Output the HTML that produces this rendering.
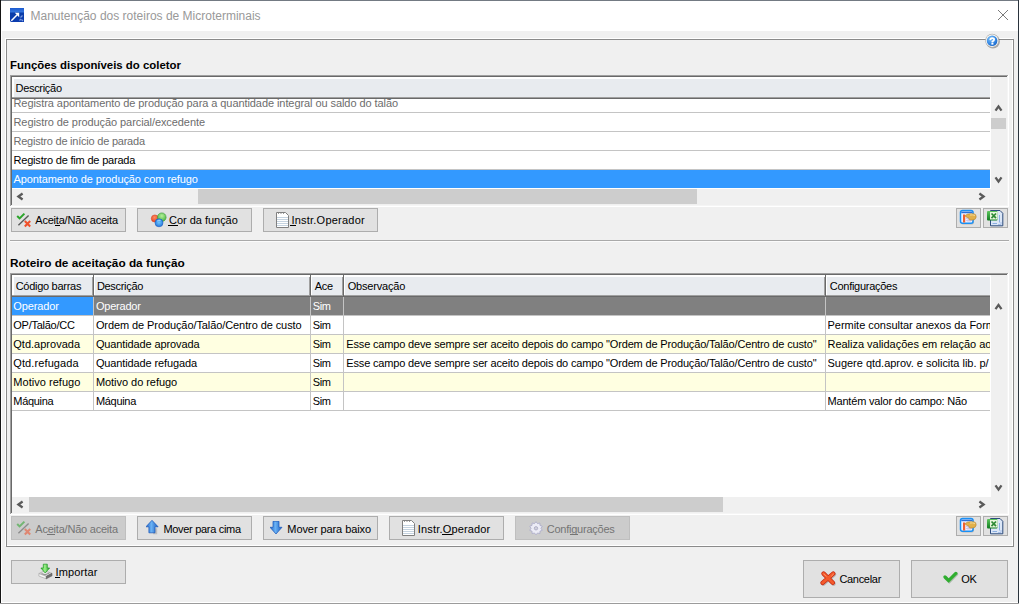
<!DOCTYPE html>
<html><head><meta charset="utf-8"><style>
html,body{margin:0;padding:0}
body{width:1033px;height:611px;position:relative;overflow:hidden;background:#fff;font-family:"Liberation Sans",sans-serif}
.t{position:absolute;white-space:pre;font-family:"Liberation Sans",sans-serif}
u{text-decoration:none;padding:0 1px;margin:0 -1px;background:linear-gradient(currentColor,currentColor) no-repeat 0 100%/100% 1px}
</style></head><body>
<div style="position:absolute;left:0px;top:0px;width:1019px;height:1px;background:#737a83"></div>
<div style="position:absolute;left:1px;top:1px;width:1017px;height:602px;background:#fff"></div>
<div style="position:absolute;left:2px;top:31px;width:1016px;height:571px;background:#f0f0f0"></div>
<div style="position:absolute;left:0px;top:0px;width:1px;height:603px;background:#151515"></div>
<div style="position:absolute;left:1018px;top:0px;width:1px;height:604px;background:#2a333c"></div>
<div style="position:absolute;left:0px;top:603px;width:1019px;height:1px;background:#9b9b9b"></div>
<svg style="position:absolute;left:10px;top:8px" width="14" height="14" viewBox="0 0 14 14">
<defs><linearGradient id="tg" x1="0" y1="0" x2="0" y2="1"><stop offset="0" stop-color="#1a5ad0"/><stop offset="0.28" stop-color="#3576dd"/><stop offset="0.36" stop-color="#0a3ca8"/><stop offset="1" stop-color="#0b3db0"/></linearGradient></defs>
<path d="M0 0 H14 V14 H1 L0 13 Z" fill="url(#tg)"/>
<path d="M1.3 12.7 L7.2 6.8" stroke="#fff" stroke-width="1.5"/><path d="M4.8 4.8 H9.2 V9.2 Z" fill="#fff"/>
<path d="M10.5 9.5 L12.5 7.5 M9.5 12.5 L11 11 M11.5 11.5 L13 13" stroke="#7d9be0" stroke-width="1.2"/>
</svg>
<div class="t" style="left:30.50px;top:9px;font-size:12px;line-height:14px;letter-spacing:-0.000px;color:#999999;">Manutenção dos roteiros de Microterminais</div>
<svg style="position:absolute;left:997px;top:9px" width="12" height="12" viewBox="0 0 12 12">
<path d="M1 1 L11 11 M11 1 L1 11" stroke="#7a7a7a" stroke-width="1"/></svg>
<div style="position:absolute;left:5px;top:38px;width:1008px;height:1px;background:#fff"></div>
<div style="position:absolute;left:5px;top:38px;width:1px;height:508px;background:#fff"></div>
<div style="position:absolute;left:5px;top:545px;width:1008px;height:1px;background:#fff"></div>
<div style="position:absolute;left:1012px;top:38px;width:1px;height:508px;background:#fff"></div>
<div style="position:absolute;left:6px;top:39px;width:1008px;height:1px;background:#8a8a8a"></div>
<div style="position:absolute;left:6px;top:39px;width:1px;height:508px;background:#8a8a8a"></div>
<div style="position:absolute;left:6px;top:546px;width:1008px;height:1px;background:#8a8a8a"></div>
<div style="position:absolute;left:1013px;top:39px;width:1px;height:508px;background:#8a8a8a"></div>
<svg style="position:absolute;left:984px;top:32px" width="18" height="18" viewBox="0 0 18 18">
<defs><radialGradient id="hg" cx="0.35" cy="0.3" r="0.75"><stop offset="0" stop-color="#7cc0f8"/><stop offset="0.6" stop-color="#3b8de6"/><stop offset="1" stop-color="#1765c8"/></radialGradient></defs>
<circle cx="8.9" cy="9.5" r="7" fill="#6a6a6a" opacity="0.55"/>
<circle cx="8.1" cy="8.7" r="6.9" fill="#b5b5b5"/>
<circle cx="8.1" cy="8.7" r="6.2" fill="#fbf8f2"/>
<circle cx="8.1" cy="8.7" r="5.3" fill="url(#hg)"/>
<path d="M6.3 8.1 Q6.4 6.1 8.2 6.1 Q10.2 6.1 10.1 7.7 Q10 8.8 8.4 9.5 V10.4" fill="none" stroke="#fff" stroke-width="1.8"/><rect x="7.4" y="11" width="2" height="1.6" fill="#fff"/>
</svg>
<div class="t" style="left:10.30px;top:59px;font-size:11px;line-height:13px;letter-spacing:0.000px;color:#000;font-weight:bold;transform:scaleX(1.0359);transform-origin:0 0;">Funções disponíveis do coletor</div>
<div style="position:absolute;left:10px;top:75px;width:999px;height:1px;background:#a0a0a0"></div>
<div style="position:absolute;left:10px;top:75px;width:1px;height:132px;background:#a0a0a0"></div>
<div style="position:absolute;left:10px;top:206px;width:999px;height:1px;background:#fff"></div>
<div style="position:absolute;left:1008px;top:75px;width:1px;height:132px;background:#fff"></div>
<div style="position:absolute;left:11px;top:76px;width:997px;height:1px;background:#696969"></div>
<div style="position:absolute;left:11px;top:76px;width:1px;height:130px;background:#696969"></div>
<div style="position:absolute;left:11px;top:205px;width:997px;height:1px;background:#f5f5f5"></div>
<div style="position:absolute;left:1007px;top:76px;width:1px;height:130px;background:#f5f5f5"></div>
<div style="position:absolute;left:12px;top:77px;width:995px;height:128px;background:#fff"></div>
<div style="position:absolute;left:12px;top:77px;width:978px;height:22px;background:#fff"></div>
<div style="position:absolute;left:14px;top:79px;width:976px;height:18px;background:#e8ebef"></div>
<div style="position:absolute;left:12px;top:97px;width:978px;height:1px;background:#a0a0a0"></div>
<div style="position:absolute;left:12px;top:98px;width:978px;height:1px;background:#696969"></div>
<div style="position:absolute;left:991px;top:77px;width:16px;height:22px;background:#f0f0f0"></div>
<div class="t" style="left:15.50px;top:82px;font-size:11px;line-height:13px;letter-spacing:-0.300px;color:#000;">Descrição</div>
<div style="position:absolute;left:12px;top:99px;width:978px;height:89px;background:#fff"></div>
<div style="position:absolute;left:12px;top:112px;width:978px;height:1px;background:#c4c4c4"></div>
<div style="position:absolute;left:12px;top:131px;width:978px;height:1px;background:#c4c4c4"></div>
<div style="position:absolute;left:12px;top:150px;width:978px;height:1px;background:#c4c4c4"></div>
<div style="position:absolute;left:12px;top:169px;width:978px;height:1px;background:#c4c4c4"></div>
<div style="position:absolute;left:12px;top:170px;width:978px;height:18px;background:#3399ff"></div>
<div class="t" style="left:13.50px;top:97px;font-size:11px;line-height:13px;letter-spacing:-0.074px;color:#6d6d6d;">Registra apontamento de produção para a quantidade integral ou saldo do talão</div>
<div class="t" style="left:13.50px;top:116px;font-size:11px;line-height:13px;letter-spacing:-0.079px;color:#6d6d6d;">Registro de produção parcial/excedente</div>
<div class="t" style="left:13.50px;top:135px;font-size:11px;line-height:13px;letter-spacing:-0.225px;color:#6d6d6d;">Registro de início de parada</div>
<div class="t" style="left:13.50px;top:154px;font-size:11px;line-height:13px;letter-spacing:-0.194px;color:#000;">Registro de fim de parada</div>
<div class="t" style="left:13.50px;top:173px;font-size:11px;line-height:13px;letter-spacing:-0.101px;color:#fff;">Apontamento de produção com refugo</div>
<div style="position:absolute;left:991px;top:99px;width:16px;height:90px;background:#f0f0f0"></div>
<div style="position:absolute;left:991px;top:118px;width:15px;height:11px;background:#cdcdcd"></div>
<div style="position:absolute;left:12px;top:188px;width:978px;height:1px;background:#fff"></div>
<div style="position:absolute;left:12px;top:189px;width:995px;height:16px;background:#f0f0f0"></div>
<div style="position:absolute;left:198px;top:189px;width:499px;height:15px;background:#cdcdcd"></div>
<svg style="position:absolute;left:0;top:0" width="1033" height="611"><g fill="none" stroke="#5a5a5a" stroke-width="2.3"><path d="M995.5 110.6 L998.5 106.4 L1001.5 110.6"/><path d="M995.5 177.4 L998.5 181.6 L1001.5 177.4"/><path d="M22.6 193.5 L18.4 196.5 L22.6 199.5"/><path d="M979.4 193.5 L983.6 196.5 L979.4 199.5"/></g></svg>
<div style="position:absolute;left:12px;top:77px;width:978px;height:22px;background:#fff"></div>
<div style="position:absolute;left:14px;top:79px;width:976px;height:18px;background:#e8ebef"></div>
<div style="position:absolute;left:12px;top:97px;width:978px;height:1px;background:#a0a0a0"></div>
<div style="position:absolute;left:12px;top:98px;width:978px;height:1px;background:#696969"></div>
<div style="position:absolute;left:991px;top:77px;width:16px;height:22px;background:#f0f0f0"></div>
<div class="t" style="left:15.50px;top:82px;font-size:11px;line-height:13px;letter-spacing:-0.300px;color:#000;">Descrição</div>
<div style="position:absolute;left:11px;top:208px;width:115px;height:24px;background:#e1e1e1;border:1px solid #adadad;box-sizing:border-box"></div>
<svg style="position:absolute;left:16px;top:212px;" width="16" height="16" viewBox="0 0 16 16">
<path d="M1.2 4 L3.6 6.4 L8.4 1.6" fill="none" stroke="#2aa52a" stroke-width="2"/>
<path d="M2.4 13.2 L12.6 3.4" stroke="#5a5a5a" stroke-width="1.4"/>
<path d="M8.8 9 L14.2 14.4 M14.2 9 L8.8 14.4" stroke="#f0502a" stroke-width="2.1"/>
</svg>
<div class="t" style="left:35.30px;top:214px;font-size:11px;line-height:13px;letter-spacing:-0.219px;color:#000;">Acei<u>t</u>a/Não aceita</div>
<div style="position:absolute;left:137px;top:208px;width:115px;height:24px;background:#e1e1e1;border:1px solid #adadad;box-sizing:border-box"></div>
<svg style="position:absolute;left:150px;top:211px" width="18" height="18" viewBox="0 0 18 18">
<defs>
<radialGradient id="cr" cx="0.45" cy="0.35" r="0.7"><stop offset="0" stop-color="#ff8a60"/><stop offset="1" stop-color="#e2401e"/></radialGradient>
<radialGradient id="cg" cx="0.5" cy="0.35" r="0.7"><stop offset="0" stop-color="#b4f09a"/><stop offset="1" stop-color="#3fae3a"/></radialGradient>
<radialGradient id="cb" cx="0.5" cy="0.45" r="0.65"><stop offset="0" stop-color="#6cc6ff"/><stop offset="1" stop-color="#1a6ad6"/></radialGradient>
</defs>
<circle cx="4.9" cy="7.5" r="3.6" fill="url(#cr)" stroke="#d23a1a" stroke-width="0.5"/>
<circle cx="11.8" cy="6.2" r="4.3" fill="url(#cg)" stroke="#3a9a36" stroke-width="0.6"/>
<circle cx="9" cy="11.8" r="4" fill="url(#cb)" stroke="#1a5cc0" stroke-width="0.6"/>
<path d="M7.2 10 Q8.5 9 10.6 9.3" stroke="#c8ecff" stroke-width="0.9" fill="none" opacity="0.8"/>
</svg>
<div class="t" style="left:169.00px;top:214px;font-size:11px;line-height:13px;letter-spacing:-0.023px;color:#000;"><u>C</u>or da função</div>
<div style="position:absolute;left:263px;top:208px;width:115px;height:24px;background:#e1e1e1;border:1px solid #adadad;box-sizing:border-box"></div>
<svg style="position:absolute;left:276px;top:212px" width="14" height="17" viewBox="0 0 14 17">
<path d="M0.5 0.5 H9.5 L12.5 3.5 V15.5 H0.5 Z" fill="#fff" stroke="#808080" stroke-width="1"/>
<path d="M1 5.5 H12 M1 7.5 H12 M1 9.5 H12 M1 11.5 H12 M1 13.5 H12" stroke="#c5d3e0" stroke-width="1"/>
<path d="M2 1 l1 1 M4.5 1 l1 1 M7 1 l1 1" stroke="#9a9a9a" stroke-width="1"/>
</svg>
<div class="t" style="left:291.40px;top:214px;font-size:11px;line-height:13px;letter-spacing:0.227px;color:#000;"><u>I</u>nstr.Operador</div>
<div style="position:absolute;left:956px;top:208px;width:25px;height:20px;background:#e1e1e1;border:1px solid #adadad;box-sizing:border-box"></div>
<svg style="position:absolute;left:959px;top:209px" width="18" height="17" viewBox="0 0 18 17">
<rect x="2" y="2.6" width="13" height="13" rx="2" fill="#6a6a6a" opacity="0.35"/>
<rect x="1.5" y="1.5" width="12.5" height="12.8" rx="2" fill="#eef0ff" stroke="#1990f5" stroke-width="1.5"/>
<rect x="2.3" y="2.6" width="11" height="1.6" fill="#2a70d8"/>
<rect x="4" y="5.5" width="2.2" height="8" fill="#f06030"/>
<path d="M7 7.5 H13 M7 9.5 H13 M7 11.5 H13 M9 5 V13 M11 5 V13" stroke="#c8c0e8" stroke-width="0.8"/>
<path d="M6 6.8 Q8 4.6 11 4.8 L15 4.8 Q17.3 5.2 17.2 8 Q16.8 11 13.5 11 L10.5 11 Q9.5 10.2 10 9.2 L8.2 8.4 Q6.8 8.2 6 6.8Z" fill="#e2b04a" stroke="#b58530" stroke-width="0.6"/>
<path d="M11 6 Q14 5.5 16 6.5" stroke="#f5dc98" stroke-width="1" fill="none"/>
</svg>
<div style="position:absolute;left:983px;top:208px;width:25px;height:20px;background:#e1e1e1;border:1px solid #adadad;box-sizing:border-box"></div>
<svg style="position:absolute;left:986px;top:209px" width="18" height="18" viewBox="0 0 18 18">
<path d="M4.5 1.5 H14 L16.8 4.3 V16.8 H4.5 Z" fill="#dce7f7" stroke="#2c4a7c" stroke-width="1"/>
<path d="M6.5 14.5 H11 M13.5 6 V13.5" stroke="#8aaee0" stroke-width="1"/>
<path d="M15 13 V15.5 H12" stroke="#9db8e6" stroke-width="0.8" fill="none"/>
<defs><linearGradient id="xg" x1="0" y1="0" x2="0" y2="1"><stop offset="0" stop-color="#5ec85e"/><stop offset="1" stop-color="#0f7a1f"/></linearGradient></defs>
<rect x="1" y="2" width="10.5" height="9.5" rx="1" fill="url(#xg)"/>
<rect x="4" y="3" width="7.5" height="7.5" fill="#e8f6dc"/>
<path d="M5.5 4.5 L10 9.2 M10 4.5 L5.5 9.2" stroke="#2d8a35" stroke-width="1.7"/>
</svg>
<div style="position:absolute;left:10px;top:240px;width:999px;height:1px;background:#a9a9a9"></div>
<div style="position:absolute;left:10px;top:241px;width:999px;height:1px;background:#fbfbfb"></div>
<div class="t" style="left:10.00px;top:257px;font-size:11px;line-height:13px;letter-spacing:0.000px;color:#000;font-weight:bold;transform:scaleX(1.0744);transform-origin:0 0;">Roteiro de aceitação da função</div>
<div style="position:absolute;left:10px;top:273px;width:999px;height:1px;background:#a0a0a0"></div>
<div style="position:absolute;left:10px;top:273px;width:1px;height:242px;background:#a0a0a0"></div>
<div style="position:absolute;left:10px;top:514px;width:999px;height:1px;background:#fff"></div>
<div style="position:absolute;left:1008px;top:273px;width:1px;height:242px;background:#fff"></div>
<div style="position:absolute;left:11px;top:274px;width:997px;height:1px;background:#696969"></div>
<div style="position:absolute;left:11px;top:274px;width:1px;height:240px;background:#696969"></div>
<div style="position:absolute;left:11px;top:513px;width:997px;height:1px;background:#f5f5f5"></div>
<div style="position:absolute;left:1007px;top:274px;width:1px;height:240px;background:#f5f5f5"></div>
<div style="position:absolute;left:12px;top:275px;width:995px;height:238px;background:#fff"></div>
<div style="position:absolute;left:12px;top:297px;width:978px;height:199px;background:#fff"></div>
<div style="position:absolute;left:12px;top:297px;width:81px;height:18px;background:#3399ff"></div>
<div style="position:absolute;left:94px;top:297px;width:896px;height:18px;background:#808080"></div>
<div style="position:absolute;left:12px;top:315px;width:978px;height:1px;background:#c4c4c4"></div>
<div style="position:absolute;left:12px;top:316px;width:978px;height:18px;background:#fff"></div>
<div style="position:absolute;left:12px;top:334px;width:978px;height:1px;background:#c4c4c4"></div>
<div style="position:absolute;left:12px;top:335px;width:978px;height:18px;background:#ffffe1"></div>
<div style="position:absolute;left:12px;top:353px;width:978px;height:1px;background:#c4c4c4"></div>
<div style="position:absolute;left:12px;top:354px;width:978px;height:18px;background:#fff"></div>
<div style="position:absolute;left:12px;top:372px;width:978px;height:1px;background:#c4c4c4"></div>
<div style="position:absolute;left:12px;top:373px;width:978px;height:18px;background:#ffffe1"></div>
<div style="position:absolute;left:12px;top:391px;width:978px;height:1px;background:#c4c4c4"></div>
<div style="position:absolute;left:12px;top:392px;width:978px;height:18px;background:#fff"></div>
<div style="position:absolute;left:12px;top:410px;width:978px;height:1px;background:#c4c4c4"></div>
<div style="position:absolute;left:93px;top:297px;width:1px;height:114px;background:#c4c4c4"></div>
<div style="position:absolute;left:310px;top:297px;width:1px;height:114px;background:#c4c4c4"></div>
<div style="position:absolute;left:343px;top:297px;width:1px;height:114px;background:#c4c4c4"></div>
<div style="position:absolute;left:825px;top:297px;width:1px;height:114px;background:#c4c4c4"></div>
<div style="position:absolute;left:12px;top:275px;width:978px;height:22px;background:#fff"></div>
<div style="position:absolute;left:14px;top:277px;width:976px;height:18px;background:#e8ebef"></div>
<div style="position:absolute;left:12px;top:295px;width:978px;height:1px;background:#a0a0a0"></div>
<div style="position:absolute;left:12px;top:296px;width:978px;height:1px;background:#696969"></div>
<div style="position:absolute;left:92px;top:277px;width:1px;height:18px;background:#a0a0a0"></div>
<div style="position:absolute;left:93px;top:275px;width:1px;height:21px;background:#696969"></div>
<div style="position:absolute;left:94px;top:277px;width:1px;height:18px;background:#fff"></div>
<div style="position:absolute;left:309px;top:277px;width:1px;height:18px;background:#a0a0a0"></div>
<div style="position:absolute;left:310px;top:275px;width:1px;height:21px;background:#696969"></div>
<div style="position:absolute;left:311px;top:277px;width:1px;height:18px;background:#fff"></div>
<div style="position:absolute;left:342px;top:277px;width:1px;height:18px;background:#a0a0a0"></div>
<div style="position:absolute;left:343px;top:275px;width:1px;height:21px;background:#696969"></div>
<div style="position:absolute;left:344px;top:277px;width:1px;height:18px;background:#fff"></div>
<div style="position:absolute;left:824px;top:277px;width:1px;height:18px;background:#a0a0a0"></div>
<div style="position:absolute;left:825px;top:275px;width:1px;height:21px;background:#696969"></div>
<div style="position:absolute;left:826px;top:277px;width:1px;height:18px;background:#fff"></div>
<div style="position:absolute;left:991px;top:275px;width:16px;height:22px;background:#f0f0f0"></div>
<div class="t" style="left:15.70px;top:280px;font-size:11px;line-height:13px;letter-spacing:-0.283px;color:#000;">Código barras</div>
<div class="t" style="left:96.90px;top:280px;font-size:11px;line-height:13px;letter-spacing:-0.300px;color:#000;">Descrição</div>
<div class="t" style="left:314.70px;top:280px;font-size:11px;line-height:13px;letter-spacing:-0.300px;color:#000;">Ace</div>
<div class="t" style="left:347.70px;top:280px;font-size:11px;line-height:13px;letter-spacing:-0.188px;color:#000;">Observação</div>
<div class="t" style="left:829.80px;top:280px;font-size:11px;line-height:13px;letter-spacing:-0.278px;color:#000;">Configurações</div>
<div class="t" style="left:13.30px;top:300px;font-size:11px;line-height:13px;letter-spacing:-0.115px;color:#fff;">Operador</div>
<div class="t" style="left:95.90px;top:300px;font-size:11px;line-height:13px;letter-spacing:-0.215px;color:#fff;">Operador</div>
<div class="t" style="left:312.70px;top:300px;font-size:11px;line-height:13px;letter-spacing:-0.300px;color:#fff;">Sim</div>
<div class="t" style="left:13.30px;top:319px;font-size:11px;line-height:13px;letter-spacing:-0.265px;color:#000;">OP/Talão/CC</div>
<div class="t" style="left:95.90px;top:319px;font-size:11px;line-height:13px;letter-spacing:-0.089px;color:#000;">Ordem de Produção/Talão/Centro de custo</div>
<div class="t" style="left:312.70px;top:319px;font-size:11px;line-height:13px;letter-spacing:-0.300px;color:#000;">Sim</div>
<div class="t" style="left:827.50px;top:319px;font-size:11px;line-height:13px;letter-spacing:-0.020px;color:#000;width:162px;overflow:hidden;">Permite consultar anexos da Formula</div>
<div class="t" style="left:13.30px;top:338px;font-size:11px;line-height:13px;letter-spacing:0.006px;color:#000;">Qtd.aprovada</div>
<div class="t" style="left:95.90px;top:338px;font-size:11px;line-height:13px;letter-spacing:-0.122px;color:#000;">Quantidade aprovada</div>
<div class="t" style="left:312.70px;top:338px;font-size:11px;line-height:13px;letter-spacing:-0.300px;color:#000;">Sim</div>
<div class="t" style="left:346.30px;top:338px;font-size:11px;line-height:13px;letter-spacing:-0.161px;color:#000;">Esse campo deve sempre ser aceito depois do campo "Ordem de Produção/Talão/Centro de custo"</div>
<div class="t" style="left:827.50px;top:338px;font-size:11px;line-height:13px;letter-spacing:-0.020px;color:#000;width:162px;overflow:hidden;">Realiza validações em relação ao tipo</div>
<div class="t" style="left:13.30px;top:357px;font-size:11px;line-height:13px;letter-spacing:0.101px;color:#000;">Qtd.refugada</div>
<div class="t" style="left:95.90px;top:357px;font-size:11px;line-height:13px;letter-spacing:-0.119px;color:#000;">Quantidade refugada</div>
<div class="t" style="left:312.70px;top:357px;font-size:11px;line-height:13px;letter-spacing:-0.300px;color:#000;">Sim</div>
<div class="t" style="left:346.30px;top:357px;font-size:11px;line-height:13px;letter-spacing:-0.161px;color:#000;">Esse campo deve sempre ser aceito depois do campo "Ordem de Produção/Talão/Centro de custo"</div>
<div class="t" style="left:827.50px;top:357px;font-size:11px;line-height:13px;letter-spacing:-0.020px;color:#000;width:162px;overflow:hidden;">Sugere qtd.aprov. e solicita lib. p/ refugo</div>
<div class="t" style="left:13.30px;top:376px;font-size:11px;line-height:13px;letter-spacing:0.031px;color:#000;">Motivo refugo</div>
<div class="t" style="left:95.90px;top:376px;font-size:11px;line-height:13px;letter-spacing:-0.041px;color:#000;">Motivo do refugo</div>
<div class="t" style="left:312.70px;top:376px;font-size:11px;line-height:13px;letter-spacing:-0.300px;color:#000;">Sim</div>
<div class="t" style="left:13.30px;top:395px;font-size:11px;line-height:13px;letter-spacing:-0.300px;color:#000;">Máquina</div>
<div class="t" style="left:95.90px;top:395px;font-size:11px;line-height:13px;letter-spacing:-0.300px;color:#000;">Máquina</div>
<div class="t" style="left:312.70px;top:395px;font-size:11px;line-height:13px;letter-spacing:-0.300px;color:#000;">Sim</div>
<div class="t" style="left:827.50px;top:395px;font-size:11px;line-height:13px;letter-spacing:-0.187px;color:#000;width:162px;overflow:hidden;">Mantém valor do campo: Não</div>
<div style="position:absolute;left:991px;top:275px;width:16px;height:222px;background:#f0f0f0"></div>
<div style="position:absolute;left:12px;top:496px;width:978px;height:1px;background:#fff"></div>
<div style="position:absolute;left:12px;top:497px;width:995px;height:16px;background:#f0f0f0"></div>
<div style="position:absolute;left:29px;top:497px;width:694px;height:15px;background:#cdcdcd"></div>
<svg style="position:absolute;left:0;top:0" width="1033" height="611"><g fill="none" stroke="#5a5a5a" stroke-width="2.3"><path d="M995.5 309.1 L998.5 304.9 L1001.5 309.1"/><path d="M995.5 485.4 L998.5 489.6 L1001.5 485.4"/><path d="M22.6 501.5 L18.4 504.5 L22.6 507.5"/><path d="M979.4 501.5 L983.6 504.5 L979.4 507.5"/></g></svg>
<div style="position:absolute;left:11px;top:516px;width:115px;height:24px;background:#cccccc;border:1px solid #bfbfbf;box-sizing:border-box"></div>
<svg style="position:absolute;left:16px;top:520px;opacity:0.55" width="16" height="16" viewBox="0 0 16 16">
<path d="M1.2 4 L3.6 6.4 L8.4 1.6" fill="none" stroke="#2aa52a" stroke-width="2"/>
<path d="M2.4 13.2 L12.6 3.4" stroke="#5a5a5a" stroke-width="1.4"/>
<path d="M8.8 9 L14.2 14.4 M14.2 9 L8.8 14.4" stroke="#f0502a" stroke-width="2.1"/>
</svg>
<div class="t" style="left:35.30px;top:523px;font-size:11px;line-height:13px;letter-spacing:-0.219px;color:#747474;">Ac<u>e</u>ita/Não aceita</div>
<div style="position:absolute;left:137px;top:516px;width:115px;height:24px;background:#e1e1e1;border:1px solid #adadad;box-sizing:border-box"></div>
<svg style="position:absolute;left:146px;top:520px" width="16" height="16" viewBox="0 0 16 16">
<defs><linearGradient id="ua" x1="0" x2="1"><stop offset="0" stop-color="#1d62c8"/><stop offset="0.45" stop-color="#6ab2f4"/><stop offset="1" stop-color="#1a5cc0"/></linearGradient></defs>
<path d="M7.2 14.2 H11.2 V8.2 L7 8.2Z" fill="#555" opacity="0.25"/>
<path d="M6 0.3 L12.1 6.8 H9 V12.8 H2.9 V6.8 H-0.1 Z" fill="url(#ua)" stroke="#1555b8" stroke-width="0.7"/>
</svg>
<div class="t" style="left:163.40px;top:523px;font-size:11px;line-height:13px;letter-spacing:-0.300px;color:#000;">Mover para cima</div>
<div style="position:absolute;left:263px;top:516px;width:115px;height:24px;background:#e1e1e1;border:1px solid #adadad;box-sizing:border-box"></div>
<svg style="position:absolute;left:270px;top:521px" width="16" height="16" viewBox="0 0 16 16">
<defs><linearGradient id="da" x1="0" x2="1"><stop offset="0" stop-color="#1d62c8"/><stop offset="0.45" stop-color="#6ab2f4"/><stop offset="1" stop-color="#1a5cc0"/></linearGradient></defs>
<path d="M3 0.3 H9 V6.3 H12 L6 13 L0 6.3 H3 Z" fill="url(#da)" stroke="#1555b8" stroke-width="0.7"/>
</svg>
<div class="t" style="left:287.30px;top:523px;font-size:11px;line-height:13px;letter-spacing:-0.078px;color:#000;">Mover para baixo</div>
<div style="position:absolute;left:389px;top:516px;width:115px;height:24px;background:#e1e1e1;border:1px solid #adadad;box-sizing:border-box"></div>
<svg style="position:absolute;left:402px;top:520px" width="14" height="17" viewBox="0 0 14 17">
<path d="M0.5 0.5 H9.5 L12.5 3.5 V15.5 H0.5 Z" fill="#fff" stroke="#808080" stroke-width="1"/>
<path d="M1 5.5 H12 M1 7.5 H12 M1 9.5 H12 M1 11.5 H12 M1 13.5 H12" stroke="#c5d3e0" stroke-width="1"/>
<path d="M2 1 l1 1 M4.5 1 l1 1 M7 1 l1 1" stroke="#9a9a9a" stroke-width="1"/>
</svg>
<div class="t" style="left:417.80px;top:523px;font-size:11px;line-height:13px;letter-spacing:0.165px;color:#000;">Instr.<u>O</u>perador</div>
<div style="position:absolute;left:515px;top:516px;width:115px;height:24px;background:#cccccc;border:1px solid #bfbfbf;box-sizing:border-box"></div>
<svg style="position:absolute;left:528px;top:520px" width="16" height="17" viewBox="0 0 16 17">
<path d="M8.00 1.70 L9.51 3.64 L11.88 2.96 L11.96 5.42 L14.28 6.26 L12.90 8.30 L14.28 10.34 L11.96 11.18 L11.88 13.64 L9.51 12.96 L8.00 14.90 L6.49 12.96 L4.12 13.64 L4.04 11.18 L1.72 10.34 L3.10 8.30 L1.72 6.26 L4.04 5.42 L4.12 2.96 L6.49 3.64 Z" fill="#ececf6" stroke="#a9a9c8" stroke-width="0.8" stroke-linejoin="round"/>
<circle cx="8" cy="8.3" r="1.7" fill="#d0d0dc" stroke="#a0a0bc" stroke-width="0.7"/>
</svg>
<div class="t" style="left:546.70px;top:523px;font-size:11px;line-height:13px;letter-spacing:-0.236px;color:#747474;">Confi<u>g</u>urações</div>
<div style="position:absolute;left:956px;top:516px;width:25px;height:20px;background:#e1e1e1;border:1px solid #adadad;box-sizing:border-box"></div>
<svg style="position:absolute;left:959px;top:517px" width="18" height="17" viewBox="0 0 18 17">
<rect x="2" y="2.6" width="13" height="13" rx="2" fill="#6a6a6a" opacity="0.35"/>
<rect x="1.5" y="1.5" width="12.5" height="12.8" rx="2" fill="#eef0ff" stroke="#1990f5" stroke-width="1.5"/>
<rect x="2.3" y="2.6" width="11" height="1.6" fill="#2a70d8"/>
<rect x="4" y="5.5" width="2.2" height="8" fill="#f06030"/>
<path d="M7 7.5 H13 M7 9.5 H13 M7 11.5 H13 M9 5 V13 M11 5 V13" stroke="#c8c0e8" stroke-width="0.8"/>
<path d="M6 6.8 Q8 4.6 11 4.8 L15 4.8 Q17.3 5.2 17.2 8 Q16.8 11 13.5 11 L10.5 11 Q9.5 10.2 10 9.2 L8.2 8.4 Q6.8 8.2 6 6.8Z" fill="#e2b04a" stroke="#b58530" stroke-width="0.6"/>
<path d="M11 6 Q14 5.5 16 6.5" stroke="#f5dc98" stroke-width="1" fill="none"/>
</svg>
<div style="position:absolute;left:983px;top:516px;width:25px;height:20px;background:#e1e1e1;border:1px solid #adadad;box-sizing:border-box"></div>
<svg style="position:absolute;left:986px;top:517px" width="18" height="18" viewBox="0 0 18 18">
<path d="M4.5 1.5 H14 L16.8 4.3 V16.8 H4.5 Z" fill="#dce7f7" stroke="#2c4a7c" stroke-width="1"/>
<path d="M6.5 14.5 H11 M13.5 6 V13.5" stroke="#8aaee0" stroke-width="1"/>
<path d="M15 13 V15.5 H12" stroke="#9db8e6" stroke-width="0.8" fill="none"/>
<defs><linearGradient id="xg" x1="0" y1="0" x2="0" y2="1"><stop offset="0" stop-color="#5ec85e"/><stop offset="1" stop-color="#0f7a1f"/></linearGradient></defs>
<rect x="1" y="2" width="10.5" height="9.5" rx="1" fill="url(#xg)"/>
<rect x="4" y="3" width="7.5" height="7.5" fill="#e8f6dc"/>
<path d="M5.5 4.5 L10 9.2 M10 4.5 L5.5 9.2" stroke="#2d8a35" stroke-width="1.7"/>
</svg>
<div style="position:absolute;left:11px;top:560px;width:115px;height:24px;background:#e1e1e1;border:1px solid #adadad;box-sizing:border-box"></div>
<svg style="position:absolute;left:37px;top:562px" width="17" height="18" viewBox="0 0 17 18">
<defs><linearGradient id="ig" x1="0" y1="0" x2="1" y2="0"><stop offset="0" stop-color="#2fb82f"/><stop offset="0.45" stop-color="#9df28a"/><stop offset="1" stop-color="#1f9a24"/></linearGradient></defs>
<path d="M1.9 11.6 L7.5 8.8 L15 11.3 L9.3 14.3 Z" fill="#e6e6e6" stroke="#9a9a9a" stroke-width="0.6"/>
<path d="M1.9 11.6 L9.3 14.3 L9.3 16.8 L1.9 14.1 Z" fill="#f7f7f7" stroke="#a0a0a0" stroke-width="0.6"/>
<path d="M9.3 14.3 L15 11.3 L15 13.8 L9.3 16.8 Z" fill="#6f6f6f" stroke="#5a5a5a" stroke-width="0.6"/>
<path d="M4.5 11.5 L8 12.8 L12.5 11" stroke="#777" stroke-width="0.8" fill="none"/>
<path d="M6.3 2.2 H10.3 V6 H12.6 L8.2 11 L3.9 6 H6.3 Z" fill="url(#ig)" stroke="#1e9a22" stroke-width="0.7"/>
</svg>
<div class="t" style="left:55.50px;top:566px;font-size:11px;line-height:13px;letter-spacing:0.144px;color:#000;"><u>I</u>mportar</div>
<div style="position:absolute;left:803px;top:560px;width:97px;height:38px;background:#e1e1e1;border:1px solid #adadad;box-sizing:border-box"></div>
<svg style="position:absolute;left:820px;top:571px" width="18" height="17" viewBox="0 0 18 17">
<path d="M3.6 2.6 L12.8 11.8 M13.2 2.6 L2.6 11.8" stroke="#555" stroke-width="4.2" opacity="0.3" transform="translate(0.9,0.9)" stroke-linecap="round"/>
<path d="M3.6 2.6 L12.8 11.8 M13.2 2.6 L2.6 11.8" stroke="#c42a12" stroke-width="4.4" stroke-linecap="round"/>
<path d="M3.6 2.6 L12.8 11.8 M13.2 2.6 L2.6 11.8" stroke="#f45a2c" stroke-width="3" stroke-linecap="round"/>
<path d="M3.8 3 L6 5.2 M13.4 3.2 L11.6 5" stroke="#ff9a70" stroke-width="1" stroke-linecap="round"/>
</svg>
<div class="t" style="left:839.40px;top:573px;font-size:11px;line-height:13px;letter-spacing:-0.300px;color:#000;">Cancelar</div>
<div style="position:absolute;left:911px;top:560px;width:97px;height:38px;background:#e1e1e1;border:1px solid #adadad;box-sizing:border-box"></div>
<svg style="position:absolute;left:943px;top:571px" width="17" height="14" viewBox="0 0 17 14">
<path d="M2 6 L5.6 9.6 L12.8 2.4" fill="none" stroke="#1a5a1a" stroke-width="3.4" opacity="0.3" transform="translate(0.7,0.7)" stroke-linecap="round"/>
<path d="M2 6 L5.6 9.6 L12.8 2.4" fill="none" stroke="#2fae2f" stroke-width="3.2" stroke-linecap="round"/>
</svg>
<div class="t" style="left:961.30px;top:573px;font-size:11px;line-height:13px;letter-spacing:-0.300px;color:#000;">OK</div>
</body></html>
